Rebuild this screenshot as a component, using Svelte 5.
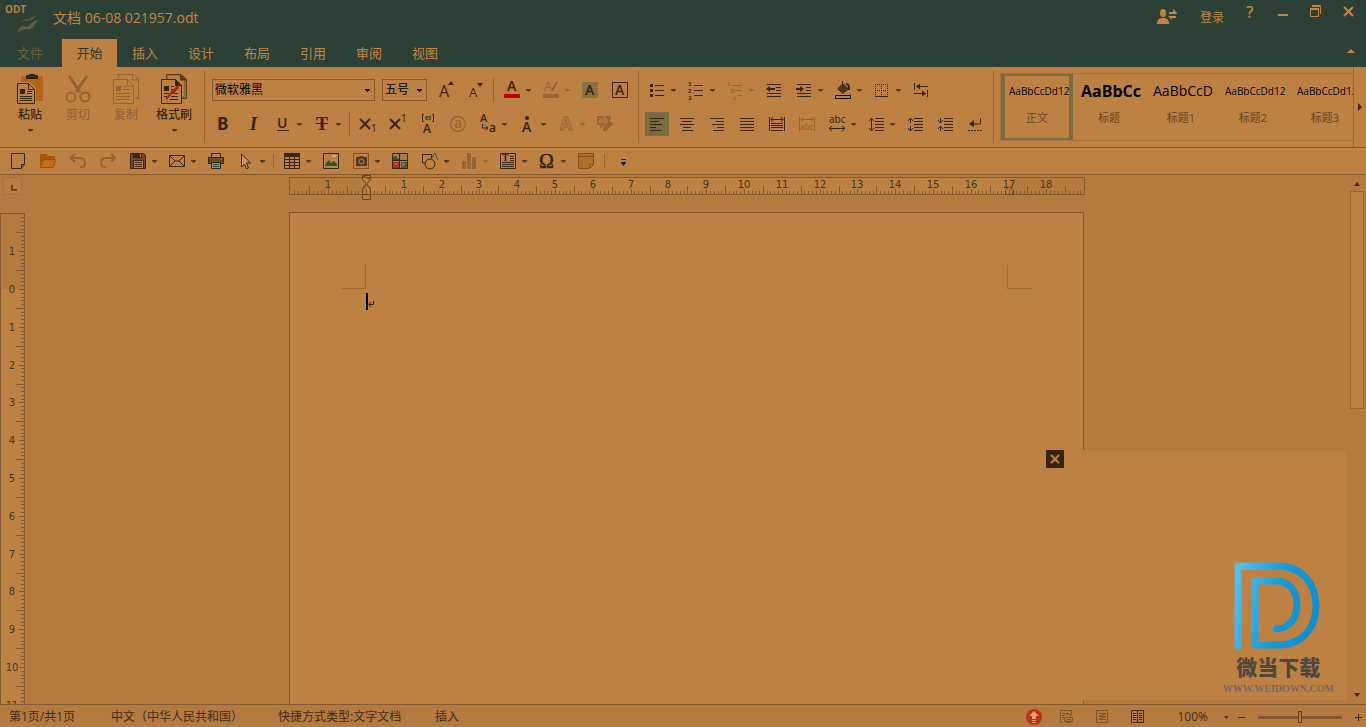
<script>
  // 24x24 line icons, drawn with currentColor
  const icons = {
    // font group
    grow: '<text x="6" y="19" font-size="16">A</text><path class="solid" d="M15 7l3-4 3 4z"/>',
    shrink: '<text x="6" y="19" font-size="13">A</text><path class="solid" d="M14 5h6l-3 4z"/>',
    fontColor: '<text x="7" y="13" font-size="14" font-weight="600">A</text><path fill="#c00000" stroke="none" d="M4 16h16v4H4z"/>',
    highlight: '<text x="5" y="13" font-size="13">A</text><path stroke-width="2" d="M13 13l5-9"/><path class="solid" d="M4 16h16v4H4z"/><path class="solid" d="M4 16h16v4H4z"/>',
    shade: '<path fill="#8a7044" stroke="none" d="M4 4h16v16H4z"/><text x="7" y="17" font-size="14" font-weight="600">A</text>',
    charBorder: '<path d="M4.500 4.500h15v15h-15z"/><text x="7" y="17" font-size="14" font-weight="600">A</text>',
    bold: '<text x="6" y="18" font-size="17" font-weight="700">B</text>',
    italic: '<text x="9" y="18" font-size="18" font-style="italic" font-weight="700" font-family="Liberation Serif">I</text>',
    underline: '<text x="6" y="16" font-size="14" font-weight="600">U</text><path d="M6 18.500h12"/>',
    strike: '<text x="6" y="18" font-size="18" font-weight="700" font-family="Liberation Serif">T</text><path d="M6 11.500h12"/>',
    sub: '<path stroke-width="2" d="M4 7l10 10M14 7L4 17"/><text x="15" y="20" font-size="10">1</text>',
    sup: '<path stroke-width="2" d="M4 7l10 10M14 7L4 17"/><text x="15" y="10" font-size="10">1</text>',
    phonetic: '<text x="9" y="8" font-size="7" font-weight="600" font-family="Liberation Sans">ei</text><path d="M8 2.500H6.500v7H8M16 2.500h1.500v7H16"/><text x="7" y="21" font-size="12" font-weight="600">A</text>',
    enclosed: '<circle cx="12" cy="12" r="7.500" stroke-width="1.300"/><text x="8" y="16" font-size="14" font-weight="600">a</text>',
    changeCase: '<text x="4" y="10" font-size="11" font-weight="600">A</text><path d="M6.500 12v4H11M9.500 13.500L12 16l-2.500 2.500"/><text x="13" y="20" font-size="12" font-weight="600">a</text>',
    emphasis: '<circle class="solid" cx="12" cy="6" r="2"/><text x="7" y="20" font-size="14" font-weight="600">A</text>',
    outline: '<text x="6" y="18" font-size="17" font-weight="700" style="fill:none;stroke:currentColor">A</text>',
    clear: '<path class="solid" d="M4 4h14v3l-8 7-3 3v-4H4z"/><path class="solid" d="M10 15l6-7 4 4-7 7h-3z"/><text x="5" y="11" font-size="8" font-weight="700" style="fill:#be8144">ab</text>',
    // paragraph group
    bullets: '<path d="M10 7.500h9M10 12.500h9M10 17.500h9"/><path class="solid" d="M5 6h3v3H5zM5 11h3v3H5zM5 16h3v3H5z"/>',
    numbers: '<path d="M10 7.500h9M10 12.500h9M10 17.500h9"/><text x="4" y="8" font-size="6" font-weight="700" font-family="Liberation Mono">1</text><text x="4" y="15" font-size="6" font-weight="700" font-family="Liberation Mono">2</text><text x="4" y="22" font-size="6" font-weight="700" font-family="Liberation Mono">3</text>',
    levels: '<path d="M9 7.500h10M12 12.500h7M15 17.500h4"/><text x="4" y="8" font-size="6" font-weight="700" font-family="Liberation Mono">1</text><text x="7" y="15" font-size="7" font-weight="700" font-family="Liberation Mono">a</text><text x="10" y="22" font-size="6" font-weight="700" font-family="Liberation Mono">i</text>',
    outdent: '<path d="M5 6.500h14M14 9.500h5M14 12.500h5M5 15.500h14M5 18.500h14"/><path class="solid" d="M4 11l4-3v2h5v2H8v2z"/>',
    indent: '<path d="M5 6.500h14M14 9.500h5M14 12.500h5M5 15.500h14M5 18.500h14"/><path class="solid" d="M12 11L8 8v2H4v2h4v2z"/>',
    fill: '<path class="solid" opacity=".8" d="M6 11l6-6 6 6-6 5z"/><path d="M11.500 3v7"/><path stroke-width="2" d="M15 6c3 0 3 2 3 6"/><path d="M4.500 17.500h15v3h-15z" stroke="#000"/>',
    borders: '<path stroke-dasharray="1 1" d="M5.500 6v12M11.500 6v12M17.500 6v12M5 6.500h13M5 12.500h13"/><path d="M5 18.500h13"/>',
    tabs: '<path d="M5.500 5v7M7 8.500h12M18.500 12v7M5 15.500h12"/><path class="solid" d="M7 8.500l4-3v6zM17 15.500l-4-3v6z"/>',
    left: '<path d="M5 6.500h14M5 9.500h9M5 12.500h12M5 15.500h6M5 18.500h11"/>',
    center: '<path d="M5 6.500h14M7 9.500h10M5 12.500h14M8 15.500h8M7 18.500h11"/>',
    right: '<path d="M5 6.500h14M11 9.500h8M7 12.500h12M12 15.500h7M8 18.500h11"/>',
    justify: '<path d="M5 6.500h14M5 9.500h14M5 12.500h14M5 15.500h14M5 18.500h14"/>',
    distribute: '<path d="M4.500 5v14M19.500 5v14M6 7.500h12M8 5L6 7.500 8 10M16 5l2 2.500-2 2.500M6 11.500h12M6 13.500h12M6 15.500h12M6 18.500h12"/>',
    fitText: '<path d="M4.500 5v14M19.500 5v14M6 7.500h12M8 5L6 7.500 8 10M16 5l2 2.500-2 2.500"/><text x="5" y="18" font-size="8" font-weight="600">abc</text>',
    charScale: '<text x="4" y="11" font-size="10">abc</text><path d="M4 16.500h16M7 14l-3 2.500L7 19M17 14l3 2.500L17 19"/>',
    lineSpacing: '<path d="M11 6.500h9M11 9.500h9M11 12.500h9M11 15.500h9M11 18.500h9M7.500 6v13M5 9l2.500-3L10 9M5 16l2.500 3 2.500-3"/>',
    spaceUp: '<path d="M11 6.500h9M11 9.500h9M11 12.500h9M11 15.500h9M11 18.500h9M7.500 6v5M5 9l2.500-3L10 9M7.500 14v5M5 16l2.500 3 2.500-3"/>',
    spaceDown: '<path d="M11 6.500h9M11 9.500h9M11 12.500h9M11 15.500h9M11 18.500h9M7.500 6v5M5 8l2.500 3L10 8M7.500 14v5M5 17l2.500-3 2.500 3"/>',
    marks: '<path d="M17.500 6v6H8"/><path class="solid" d="M6 12l5-4v7z"/><path stroke-dasharray="2 1" d="M5 18.500h14"/>',
    // quick access bar
    newDoc: '<path d="M5.500 4.500h13v11l-3 4h-10zM18 15.500h-2.500V19"/>',
    open: '<path fill="#a8560b" stroke="#a8560b" d="M4.500 18.500v-13h6l1 2h7v3"/><path fill="#c36e16" stroke="#a04e08" d="M4.500 18.500l3-8h12l-2 8z"/>',
    undo: '<path stroke-width="2" d="M9 5L5 9l4 4M6 9h8c3 0 5 2 5 5s-2 4-4 4h-1"/>',
    redo: '<path stroke-width="2" d="M15 5l4 4-4 4M18 9h-8c-3 0-5 2-5 5s2 4 4 4h1"/>',
    save: '<path fill="#6e4a26" d="M4.500 4.500h13l2 2v13h-15z"/><path class="solid" d="M7 4h9v5H7z"/><path fill="#be8144" d="M7.500 11.500h10v8h-10z"/><path d="M9 13.500h7M9 15.500h7M9 17.500h7"/><path stroke="#be8144" d="M14.500 5v3"/>',
    mail: '<path d="M4.500 6.500h15v11h-15zM5 7l5 5h4l5-5M5 17l5-5M14 12l5 5"/>',
    print: '<path d="M7.500 4.500h9v4h-9z"/><path fill="#6e4a26" d="M4.500 8.500h15v6h-15z"/><path fill="#be8144" d="M7.500 13.500h9v6h-9z"/><path stroke="#22505c" d="M9 15.500h6M9 17.500h6"/><path stroke="#4f8a3c" d="M16 10.500h2"/>',
    cursor: '<path fill="#c99a65" d="M7.500 5v13l3-3 2 5 2-1-2-5h4z"/>',
    table: '<path d="M4.500 4.500h15v15h-15zM5 10.500h14M5 13.500h14M5 16.500h14M9.500 8v11M14.500 8v11"/><path class="solid" d="M4 4h16v4H4z"/>',
    image: '<path d="M4.500 4.500h15v15h-15z"/><path fill="#2e561d" stroke="none" d="M6 17l1-3 3-3 2 3 3-2 3 3v2z"/><path fill="#d5a978" stroke="none" d="M13 6h4v2h-4z"/>',
    camera: '<path stroke-dasharray="1 1" d="M4.500 4.500h15v15h-15z"/><path class="solid" opacity=".75" d="M7 8h3l1-1h3l1 1h3v9H7z"/><circle cx="12.500" cy="12.500" r="2.500" stroke="#be8144"/>',
    pictures: '<path fill="#a07e56" d="M4.500 4.500h15v15h-15z"/><path fill="#2e561d" stroke="none" d="M5 8l3-1 3 4H5z"/><path fill="#b22e19" stroke="none" d="M5 13h6v6H5z"/><path fill="#3b6040" stroke="none" d="M13 13h6v6h-6z"/><path fill="#d8502d" stroke="none" d="M14 14h3v3h-3zM7 14h2v2H7z"/><path d="M11.500 5v14M5 11.500h14"/>',
    shapes: '<path d="M4.500 5.500h9v4M4.500 5v9H7"/><circle cx="12" cy="15" r="5"/><path stroke="#2e5a32" d="M13 10l4-6 3 7"/>',
    chart: '<path class="solid" d="M5 12h4v8H5zM10 4h4v16h-4zM15 8h4v12h-4z"/>',
    textBox: '<path d="M4.500 4.500h15v15h-15zM14 7.500h4M14 9.500h4M14 11.500h4M6 13.500h12M6 15.500h12M6 17.500h12"/><text x="6" y="12" font-size="10" font-weight="700" font-family="Liberation Serif">T</text>',
    symbol: '<text x="4" y="19" font-size="20" font-family="Liberation Serif" stroke-width="1" style="stroke:currentColor;stroke-width:.5px">Ω</text>',
    note: '<path fill="#b06f26" stroke="#7d511f" d="M4.500 4.500h15v11l-4 4h-11zM19 15.500h-3.500V19M5 7.500h14"/>',
    more: '<path stroke="#10292c" d="M10 10.500h5"/><path fill="#10292c" stroke="none" d="M10 13h5v1l-2.500 3-2.500-3z"/>',
    bar: ''
  };

  // 32x32 icons of the clipboard group
  const bigIcons = {
    paste: '<path fill="#b3651a" stroke="none" d="M7 3h22v25H7z"/><path fill="#33230f" stroke="none" d="M12 2h2l2-1h4l2 1h2v4H12z"/><path fill="#be8144" stroke="#be8144" stroke-width="3" d="M3.500 10.500h12l5 5v15h-17z"/><path fill="#be8144" d="M3.500 10.500h11l6 6v14h-17zM14.500 11v5.500H20"/><path class="solid" d="M6 16h5v5H6z"/><path d="M13 18.500h5M13 20.500h5M6 23.500h12M6 25.500h12M6 27.500h12"/>',
    cut: '<path stroke-width="3" d="M7 3l11 16M25 3L14 19"/><circle cx="9" cy="24" r="4.500" stroke-width="2"/><circle cx="23" cy="24" r="4.500" stroke-width="2"/>',
    copy: '<path d="M8.500 5V1.500h15l5 5v19h-3M22.500 2v5H28"/><path d="M3.500 6.500h14l6 6v18h-20zM17.500 7v6H23"/><path class="solid" d="M6 13h5v5H6z"/><path d="M13 13.500h4M13 16.500h7M6 20.500h14M6 23.500h14M6 26.500h14"/>',
    format: '<path stroke="#5a3d1c" fill="#9a6835" d="M8.500 5V1.500h15l5 5v19h-4z"/><path fill="#be8144" stroke="none" d="M10 3h12v4h4v16h-4V9H10z"/><path stroke="#5a3d1c" fill="#5a3d1c" d="M22.500 2v5H28z"/><path fill="#be8144" d="M3.500 6.500h14l6 6v18h-20z"/><path class="solid" d="M17 6v7h7z"/><path class="solid" d="M6 13h5v5H6z"/><path d="M13 13.500h3M13 16.500h2M6 20.500h5M16 20.500h4M6 23.500h3M13 23.500h7M12 26.500h8"/><path stroke="#a3260f" stroke-width="2" d="M8 26L21 12"/><path stroke="#a3260f" stroke-width="3" d="M14 20l6-6"/>'
  };

  const tabs = ['插入', '设计', '布局', '引用', '审阅', '视图'];

  const clipboard = [
    { icon: 'paste', label: '粘贴', menu: true },
    { icon: 'cut', label: '剪切', off: true },
    { icon: 'copy', label: '复制', off: true },
    { icon: 'format', label: '格式刷', menu: true }
  ];

  const t = (icon, label, opts = {}) => ({ icon, label, ...opts });
  const menu = { menu: true };
  const off = { off: true };

  const fontTop = [
    t('grow', '增大字号'), t('shrink', '减小字号'), t('bar'),
    t('fontColor', '字体颜色', menu), t('highlight', '突出显示', { menu: true, off: true }),
    t('shade', '字符底纹'), t('charBorder', '字符边框')
  ];
  const fontBottom = [
    t('bold', '加粗'), t('italic', '倾斜'), t('underline', '下划线', menu), t('strike', '删除线', menu), t('bar'),
    t('sub', '下标'), t('sup', '上标'), t('phonetic', '拼音指南'), t('enclosed', '带圈字符', off),
    t('changeCase', '更改大小写', menu), t('emphasis', '着重号', menu),
    t('outline', '文字效果', { menu: true, off: true }), t('clear', '清除格式', off)
  ];
  const paraTop = [
    t('bullets', '项目符号', menu), t('numbers', '编号', menu), t('levels', '多级列表', { menu: true, off: true }),
    t('outdent', '减少缩进'), t('indent', '增加缩进', menu), t('fill', '底纹', menu), t('borders', '边框', menu), t('tabs', '制表位')
  ];
  const paraBottom = [
    t('left', '左对齐', { active: true }), t('center', '居中'), t('right', '右对齐'), t('justify', '两端对齐'),
    t('distribute', '分散对齐'), t('fitText', '调整宽度', off), t('charScale', '字符缩放', menu),
    t('lineSpacing', '行距', menu), t('spaceUp', '增加段距'), t('spaceDown', '减少段距'), t('marks', '编辑标记')
  ];
  const quick = [
    t('newDoc', '新建'), t('open', '打开'), t('undo', '撤销', off), t('redo', '恢复', off), t('save', '保存', menu),
    t('mail', '邮件', menu), t('print', '打印'), t('cursor', '选择', menu), t('bar'),
    t('table', '表格', menu), t('image', '图片'), t('camera', '截图', menu), t('pictures', '图库'), t('shapes', '形状', menu),
    t('chart', '图表', { menu: true, off: true }), t('textBox', '文本框', menu), t('symbol', '符号', menu), t('note', '批注'), t('bar'),
    t('more', '更多')
  ];

  const styles = [
    { name: '正文', sample: 'AaBbCcDd12', kind: 'body' },
    { name: '标题', sample: 'AaBbCcD', kind: 'title' },
    { name: '标题1', sample: 'AaBbCcD', kind: 'h1' },
    { name: '标题2', sample: 'AaBbCcDd12', kind: 'h2' },
    { name: '标题3', sample: 'AaBbCcDd12', kind: 'h3' }
  ];

  // Rulers: 96 dpi, ten ticks to the centimetre
  const CM = 37.8;

  function ticks(origin, from, to) {
    const list = [];
    for (let i = from; i <= to; i++) {
      const len = i % 10 === 0 ? 5 : i % 5 === 0 ? 8 : 3;
      list.push({ at: Math.round(origin + (i * CM) / 10) + 0.5, len });
    }
    return list;
  }

  function labels(origin, from, to) {
    const list = [];
    for (let i = from; i <= to; i++) {
      list.push({ at: Math.round(origin + i * CM), text: Math.abs(i) });
    }
    return list;
  }

  const hTicks = ticks(76, -19, 189);
  const hLabels = labels(76, -1, 18).filter((l) => l.text !== 0);
  const vTicks = ticks(75, -19, 270);
  const vLabels = labels(75, -1, 27);

  let zoom = $state(50);
  let fontName = $state('微软雅黑');
  let fontSize = $state('五号');
  let popupOpen = $state(true);
</script>

{#snippet tool(item)}
  {#if item.icon === 'bar'}
    <span class="bar"></span>
  {:else}
    <button class="tool" class:off={item.off} class:active={item.active} title={item.label} aria-label={item.label}>
      <svg class="icon" viewBox="0 0 24 24" width="24" height="24">{@html icons[item.icon]}</svg>
      {#if item.menu}<svg class="caret" viewBox="0 0 9 24" width="9" height="24"><path d="M2 11h5v1L4.500 14 2 12z" /></svg>{/if}
    </button>
  {/if}
{/snippet}

<div class="app">
  <header>
    <div class="titlebar">
      <div class="logo">
        <span>ODT</span>
        <svg viewBox="0 0 24 18" width="24" height="18">
          <path d="M6 6c3-4 5-2 8-3 1-2 3-3 6-3-3 1-3 3-5 4-3 1-5 0-9 2z" />
          <path d="M1 17c2-5 5-8 9-6 4 0 5-6 12-7-3 3-4 8-8 9-5 0-8 0-13 4z" />
        </svg>
      </div>
      <h1>文档 06-08 021957.odt</h1>
      <div class="window-tools">
        <svg viewBox="0 0 20 16" width="20" height="16">
          <ellipse cx="6" cy="4" rx="3" ry="4" />
          <path d="M0 15c0-4 2-6 6-6s6 2 6 6zM12 3h4V0l4 4v1h-8zM19 7h-8l4 4V9h4z" />
        </svg>
        <a href="#login">登录</a>
        <button class="help" aria-label="帮助">?</button>
        <button aria-label="最小化"><svg viewBox="0 0 12 12" width="12" height="12"><path d="M1 9h10v2H1z" /></svg></button>
        <button aria-label="还原">
          <svg class="line" viewBox="0 0 12 12" width="12" height="12"><path d="M.5 4.500h8v7h-8zM0 3.500h9M2 1.500h8.500V9M2 .5h9" /></svg>
        </button>
        <button aria-label="关闭"><svg class="thick" viewBox="0 0 12 12" width="12" height="12"><path d="M1 2l9 9M10 2l-9 9" /></svg></button>
      </div>
    </div>
    <nav>
      <button class="tab file">文件</button>
      <button class="tab current">开始</button>
      {#each tabs as tab}
        <button class="tab">{tab}</button>
      {/each}
      <button class="collapse" aria-label="折叠功能区"><svg viewBox="0 0 8 4" width="8" height="4"><path d="M0 4l4-4 4 4z" /></svg></button>
    </nav>
  </header>

  <section class="ribbon">
    <div class="group clipboard">
      {#each clipboard as item}
        <button class="big" class:off={item.off}>
          <svg class="icon" viewBox="0 0 32 32" width="32" height="32">{@html bigIcons[item.icon]}</svg>
          <span>{item.label}</span>
          {#if item.menu}<svg class="caret" viewBox="0 0 9 9" width="9" height="9"><path d="M2 3h5v1L4.500 6 2 4z" /></svg>{/if}
        </button>
      {/each}
    </div>

    <div class="group">
      <div class="row">
        <div class="combo font-name">
          <select aria-label="字体" bind:value={fontName}>
            <option>微软雅黑</option>
            <option>宋体</option>
          </select>
          <svg class="caret" viewBox="0 0 9 9" width="9" height="9"><path d="M2 3h5v1L4.500 6 2 4z" /></svg>
        </div>
        <div class="combo font-size">
          <select aria-label="字号" bind:value={fontSize}>
            <option>五号</option>
            <option>四号</option>
          </select>
          <svg class="caret" viewBox="0 0 9 9" width="9" height="9"><path d="M2 3h5v1L4.500 6 2 4z" /></svg>
        </div>
        {#each fontTop as item}{@render tool(item)}{/each}
      </div>
      <div class="row">
        {#each fontBottom as item}{@render tool(item)}{/each}
      </div>
    </div>

    <div class="group paragraph">
      <div class="row">
        {#each paraTop as item}{@render tool(item)}{/each}
      </div>
      <div class="row">
        {#each paraBottom as item}{@render tool(item)}{/each}
      </div>
    </div>

    <div class="gallery">
      {#each styles as style, i}
        <button class="style-card" class:selected={i === 0}>
          <span class="sample {style.kind}">{style.sample}</span>
          <span class="name">{style.name}</span>
        </button>
      {/each}
    </div>
    <button class="scroll-right" aria-label="更多样式"><svg viewBox="0 0 4 8" width="4" height="8"><path d="M0 0l4 4-4 4z" /></svg></button>
  </section>

  <section class="quickbar">
    {#each quick as item}{@render tool(item)}{/each}
  </section>

  <main>
    <div class="left-rail">
      <button class="tab-stop" aria-label="制表符"><svg viewBox="0 0 6 6" width="6" height="6"><path d="M0 0h2v4h4v2H0z" /></svg></button>
      <div class="v-ruler">
        <svg width="23" height="1100">
          <rect class="lit" x="0" y="75" width="23" height="1025" />
          {#each vTicks as tick}
            <line x1={23 - tick.len} x2="23" y1={tick.at} y2={tick.at} />
          {/each}
          {#each vLabels as label}
            <text x="11" y={label.at + 4}>{label.text}</text>
          {/each}
        </svg>
      </div>
    </div>

    <div class="canvas">
      <div class="h-ruler">
        <svg width="794" height="16">
          <rect class="lit" x="76" y="0" width="643" height="16" />
          {#each hTicks as tick}
            <line x1={tick.at} x2={tick.at} y1={16 - tick.len} y2="16" />
          {/each}
          {#each hLabels as label}
            <text x={label.at} y="10">{label.text}</text>
          {/each}
          <path class="marker" d="M72.500 -2.500h8v4l-8 9M80.500 1.500l-8-4M72.500 -2.500v4l8 9M72.500 16.500v-5l4-5 4 5v5zM72.500 16.500h8v5h-8z" />
          <path class="marker" d="M715.500 16.500v-4l4-4 4 4v4z" />
        </svg>
      </div>
      <div class="page">
        <div class="corners">
          <i class="corner tl"></i>
          <i class="corner tr"></i>
        </div>
        <div class="line">
          <span class="caret-bar"></span>
          <svg viewBox="0 0 6 6" width="6" height="6"><path d="M5.500 0v3.500H1M3 1L1 3.500 3 6" /></svg>
        </div>
      </div>
    </div>

    <div class="scrollbar">
      <button aria-label="向上滚动"><svg viewBox="0 0 6 4" width="6" height="4"><path d="M0 4l3-4 3 4z" /></svg></button>
      <div class="thumb"></div>
      <button class="down" aria-label="向下滚动"><svg viewBox="0 0 6 4" width="6" height="4"><path d="M0 0h6L3 4z" /></svg></button>
    </div>

    {#if popupOpen}
      <aside class="popup">
        <button aria-label="关闭广告" onclick={() => (popupOpen = false)}>
          <svg viewBox="0 0 10 10" width="10" height="10"><path d="M1 1l8 8M9 1L1 9" /></svg>
        </button>
        <div class="brand">
          <svg viewBox="0 0 88 88" width="88" height="88">
            <defs>
              <linearGradient id="blue" gradientUnits="userSpaceOnUse" x1="0" y1="30" x2="88" y2="50">
                <stop offset="0" stop-color="#58bee6" />
                <stop offset=".5" stop-color="#149bd8" />
                <stop offset="1" stop-color="#148ac8" />
              </linearGradient>
            </defs>
            <path d="M4 84V4h40c24 0 38 18 38 40S68 83 44 83H21V19h21c14 0 21 11 21 24S55 67 42 67" />
          </svg>
          <strong>微当下载</strong>
          <span>WWW.WEIDOWN.COM</span>
        </div>
      </aside>
    {/if}
  </main>

  <footer>
    <span class="pages">第1页/共1页</span>
    <span class="lang">中文（中华人民共和国）</span>
    <span class="kind">快捷方式类型:文字文档</span>
    <span>插入</span>
    <div class="view-tools">
      <button aria-label="更新">
        <svg viewBox="0 0 16 16" width="16" height="16"><circle cx="8" cy="8" r="8" fill="#c1301c" /><path fill="#e0a070" d="M8 2l5 5h-3v3H6V7H3zM6 11h4v1H6zM6 13h4v1H6z" /></svg>
      </button>
      <button class="dim" aria-label="打印版式">
        <svg class="line" viewBox="0 0 16 16" width="16" height="16"><path d="M5 13.500H2.500v-12h11V6M4 4.500h7M4 6.500h3M4 8.500h2M4 10.500h1M8.500 5.500h4v3M6.500 8.500h8v4h-8zM8.500 10.500h4v3h-4z" /></svg>
      </button>
      <button class="dim" aria-label="Web 版式">
        <svg class="line" viewBox="0 0 16 16" width="16" height="16"><path d="M2.500 1.500h11v12h-11zM5 4.500h7L5 7.500h7L5 10.500h7" /></svg>
      </button>
      <button aria-label="阅读版式">
        <svg class="line" viewBox="0 0 16 16" width="16" height="16"><path d="M1.500 1.500h6v12h-6zM7.500 1.500h6v12h-6zM3 4.500h3M3 6.500h3M3 8.500h3M3 10.500h3M9 4.500h3M9 6.500h3M9 8.500h3M9 10.500h3" /></svg>
      </button>
      <button class="percent">100%<svg viewBox="0 0 5 3" width="5" height="3"><path d="M0 0h5L2.500 3z" /></svg></button>
      <button aria-label="缩小"><svg class="line" viewBox="0 0 8 8" width="8" height="8"><path d="M1 4.500h7" /></svg></button>
      <input type="range" min="0" max="100" aria-label="缩放" bind:value={zoom} />
      <button aria-label="放大"><svg class="line" viewBox="0 0 8 8" width="8" height="8"><path d="M1 4.500h7M4.500 1v7" /></svg></button>
    </div>
  </footer>
</div>

<style>
  :global(body) {
    background: #b47a40;
  }

  .app {
    --paper: #be8144;
    --desk: #b47a40;
    --edge: #85592f;
    --ink: #35240f;
    display: flex;
    flex-direction: column;
    height: 100vh;
    overflow: hidden;
    background: var(--desk);
    color: var(--ink);
    font-family: "Open Sans", "Noto Sans CJK SC", sans-serif;
    font-size: 12px;
    line-height: 16px;
  }

  button {
    display: flex;
    align-items: center;
    justify-content: center;
    margin: 0;
    padding: 0;
    border: 0;
    background: none;
    color: inherit;
    font: inherit;
  }

  svg {
    display: block;
    flex: none;
    fill: currentColor;
  }

  svg.line,
  svg.thick {
    fill: none;
    stroke: currentColor;
  }

  svg.thick {
    stroke-width: 2;
  }

  .icon {
    fill: none;
    stroke: currentColor;
  }

  .icon :global(.solid),
  .icon :global(text) {
    fill: currentColor;
    stroke: none;
  }

  .caret {
    color: #56391a;
  }

  .off .icon,
  .off .caret,
  .off span {
    opacity: 0.3;
  }

  /* header */
  header {
    flex: none;
    background: #2d4035;
    color: #c38547;
  }

  .titlebar {
    display: flex;
    height: 39px;
    padding: 0 11px 0 5px;
  }

  .logo {
    width: 48px;
    color: #6a5d3d;
  }

  .logo span {
    display: block;
    height: 16px;
    color: #b87e44;
    font-size: 10px;
    font-weight: 700;
    line-height: 18px;
  }

  .logo svg {
    margin-left: 11px;
  }

  h1 {
    margin: 0;
    font-size: 14px;
    font-weight: 400;
    line-height: 36px;
  }

  .window-tools {
    display: flex;
    align-items: flex-start;
    margin-left: auto;
  }

  .window-tools svg {
    margin-top: 9px;
  }

  .window-tools a {
    margin: 10px 18px 0 23px;
    color: inherit;
    text-decoration: none;
  }

  .window-tools button {
    width: 16px;
    margin-right: 17px;
  }

  .window-tools button:last-child {
    width: 12px;
    margin-left: 2px;
    margin-right: 0;
  }

  .window-tools button svg {
    margin-top: 5px;
  }

  .window-tools .help {
    font-size: 16px;
    font-weight: 600;
    line-height: 24px;
  }

  nav {
    display: flex;
    height: 28px;
  }

  .tab {
    width: 56px;
    font-size: 13px;
  }

  .tab.file {
    width: 60px;
    margin-right: 2px;
    color: #6f6242;
  }

  .tab.current {
    width: 55px;
    background: var(--paper);
    color: #2d3520;
  }

  .collapse {
    width: 8px;
    margin-left: auto;
    margin-right: 11px;
    padding-bottom: 4px;
  }

  /* ribbon */
  .ribbon {
    display: flex;
    flex: none;
    height: 80px;
    border-bottom: 1px solid var(--edge);
    background: var(--paper);
  }

  .group {
    display: flex;
    flex-direction: column;
    gap: 10px;
    box-sizing: border-box;
    width: 434px;
    margin: 4px 0;
    padding: 7px 0 0 6px;
    border-right: 1px solid #98672f;
  }

  .group.clipboard {
    flex-direction: row;
    gap: 0;
    width: 205px;
    padding: 2px 0 0 6px;
  }

  .group.paragraph {
    width: 355px;
  }

  .big {
    flex-direction: column;
    justify-content: flex-start;
    width: 48px;
    height: 64px;
  }

  .big span {
    color: #1c1206;
    line-height: 20px;
  }

  .big .caret {
    margin-top: 1px;
  }

  .row,
  .quickbar {
    display: flex;
    align-items: center;
    gap: 6px;
  }

  .row {
    height: 24px;
  }

  .tool {
    flex: none;
    height: 24px;
  }

  .tool.active {
    background: #7a6b41;
  }

  .bar {
    width: 1px;
    height: 24px;
    background: #98672f;
  }

  .combo {
    position: relative;
    box-sizing: border-box;
    height: 22px;
    border: 1px solid var(--edge);
  }

  .combo select {
    width: 100%;
    height: 20px;
    padding: 0 2px;
    border: 0;
    appearance: none;
    background: none;
    color: #000;
    font: inherit;
  }

  .combo .caret {
    position: absolute;
    top: 6px;
    right: 2px;
    color: #000;
    pointer-events: none;
  }

  .font-name {
    width: 163px;
    margin-left: 1px;
    margin-right: 1px;
  }

  .font-size {
    width: 45px;
  }

  .gallery {
    display: flex;
    flex: 1;
    box-sizing: border-box;
    min-width: 0;
    height: 68px;
    margin: 6px 0 0 6px;
    border: 1px solid #aa733b;
    border-right: 0;
    overflow: hidden;
  }

  .style-card {
    flex: none;
    flex-direction: column;
    justify-content: flex-start;
    box-sizing: border-box;
    width: 72px;
    border: 2px solid transparent;
    border-width: 2px 4px;
  }

  .style-card.selected {
    border-color: #7a6b41;
  }

  .sample {
    align-self: stretch;
    height: 30px;
    padding-left: 4px;
    overflow: hidden;
    color: #000;
    font-size: 10px;
    line-height: 30px;
    text-align: left;
    white-space: nowrap;
  }

  .sample.title {
    font-size: 16px;
    font-weight: 700;
  }

  .sample.h1 {
    font-size: 14px;
  }

  .name {
    margin-top: 4px;
    color: #68461f;
    font-size: 11px;
  }

  .scroll-right {
    width: 13px;
    border-left: 1px solid #98672f;
  }

  .quickbar {
    flex: none;
    height: 26px;
    padding-left: 6px;
    border-bottom: 1px solid var(--edge);
    background: var(--paper);
  }

  .quickbar .bar {
    height: 14px;
  }

  /* document area */
  main {
    position: relative;
    display: flex;
    flex: 1;
    min-height: 0;
  }

  .left-rail {
    display: flex;
    flex-direction: column;
    width: 25px;
  }

  .tab-stop {
    flex: none;
    box-sizing: border-box;
    width: 19px;
    height: 18px;
    margin: 2px 3px 18px;
    padding: 4px 0 0 3px;
    border: 1px solid #a97038;
    background: #b87d42;
    color: #6b441e;
  }

  .v-ruler {
    flex: 1;
    min-height: 0;
    border: 1px solid var(--edge);
    border-bottom: 0;
    overflow: hidden;
  }

  .lit {
    fill: var(--paper);
  }

  line {
    stroke: var(--edge);
    shape-rendering: crispEdges;
  }

  text {
    fill: #43351b;
    font-family: "DejaVu Sans", sans-serif;
    font-size: 10px;
    text-anchor: middle;
  }

  .icon :global(text) {
    text-anchor: start;
  }

  .canvas {
    display: flex;
    flex: 1;
    flex-direction: column;
    align-items: center;
    min-width: 0;
  }

  .h-ruler {
    flex: none;
    margin: 2px 0 17px;
    border: 1px solid var(--edge);
  }

  .h-ruler svg {
    overflow: visible;
  }

  .marker {
    fill: none;
    stroke: #66431f;
  }

  .page {
    flex: 1;
    box-sizing: border-box;
    width: 795px;
    margin-right: 1px;
    padding: 52px 51px 0 52px;
    border: 1px solid var(--edge);
    border-bottom: 0;
    background: var(--paper);
  }

  .corners {
    display: flex;
    justify-content: space-between;
  }

  .corner {
    box-sizing: border-box;
    width: 24px;
    height: 24px;
    border-bottom: 1px solid #9f6b36;
  }

  .tl {
    border-right: 1px solid #9f6b36;
  }

  .tr {
    width: 25px;
    border-left: 1px solid #9f6b36;
  }

  .page .line {
    display: flex;
    align-items: center;
    margin: 4px 24px;
  }

  .caret-bar {
    width: 2px;
    height: 17px;
    background: #000;
  }

  .page .line svg {
    margin-top: 4px;
    fill: none;
    stroke: currentColor;
  }

  .scrollbar {
    display: flex;
    flex-direction: column;
    width: 17px;
  }

  .scrollbar button {
    flex: none;
    box-sizing: border-box;
    width: 16px;
    height: 16px;
    padding-top: 2px;
  }

  .thumb {
    box-sizing: border-box;
    width: 14px;
    height: 218px;
    margin-left: 1px;
    border: 1px solid #98672f;
    background: var(--paper);
  }

  .scrollbar .down {
    margin-top: auto;
    padding: 0 0 2px;
  }

  .popup {
    position: absolute;
    right: 20px;
    bottom: 4px;
    display: flex;
    align-items: flex-start;
    justify-content: space-between;
    box-sizing: border-box;
    width: 300px;
    height: 250px;
    background: var(--paper);
  }

  .popup button {
    width: 18px;
    height: 18px;
    background: #35240f;
    color: #be8144;
  }

  .popup button svg {
    fill: none;
    stroke: currentColor;
    stroke-width: 2;
  }

  .brand {
    display: flex;
    flex-direction: column;
    align-items: center;
    padding: 112px 12px 0 0;
    color: #504840;
  }

  .brand path {
    fill: none;
    stroke: url(#blue);
    stroke-width: 7;
    stroke-linecap: round;
    stroke-linejoin: round;
  }

  .brand strong {
    font-size: 21px;
    font-weight: 900;
    line-height: 34px;
  }

  .brand span {
    color: #736963;
    font-family: "Liberation Serif", serif;
    font-size: 10px;
    font-weight: 700;
    line-height: 10px;
  }

  /* status bar */
  footer {
    display: flex;
    flex: none;
    align-items: center;
    height: 20px;
    padding: 2px 4px 0 9px;
    border-top: 1px solid var(--edge);
    color: #402c14;
    white-space: nowrap;
  }

  .pages {
    width: 102px;
  }

  .lang {
    width: 167px;
  }

  .kind {
    width: 157px;
  }

  .view-tools {
    display: flex;
    align-items: center;
    gap: 20px;
    margin-left: auto;
  }

  .view-tools button:first-child {
    margin-right: -4px;
  }

  .view-tools .dim {
    opacity: 0.45;
  }

  .view-tools .percent {
    gap: 16px;
    margin-left: 11px;
  }

  .view-tools .percent svg {
    opacity: 0.8;
  }

  .percent + button {
    margin-left: -12px;
  }

  input[type="range"] {
    width: 84px;
    height: 12px;
    margin: 0 -8px 0 -7px;
    appearance: none;
    background: linear-gradient(#85592f, #85592f) center / 100% 3px no-repeat;
  }

  input[type="range"]::-webkit-slider-thumb {
    appearance: none;
    box-sizing: border-box;
    width: 4px;
    height: 12px;
    border: 1px solid #5e3f1e;
    background: #b47a40;
  }
</style>
